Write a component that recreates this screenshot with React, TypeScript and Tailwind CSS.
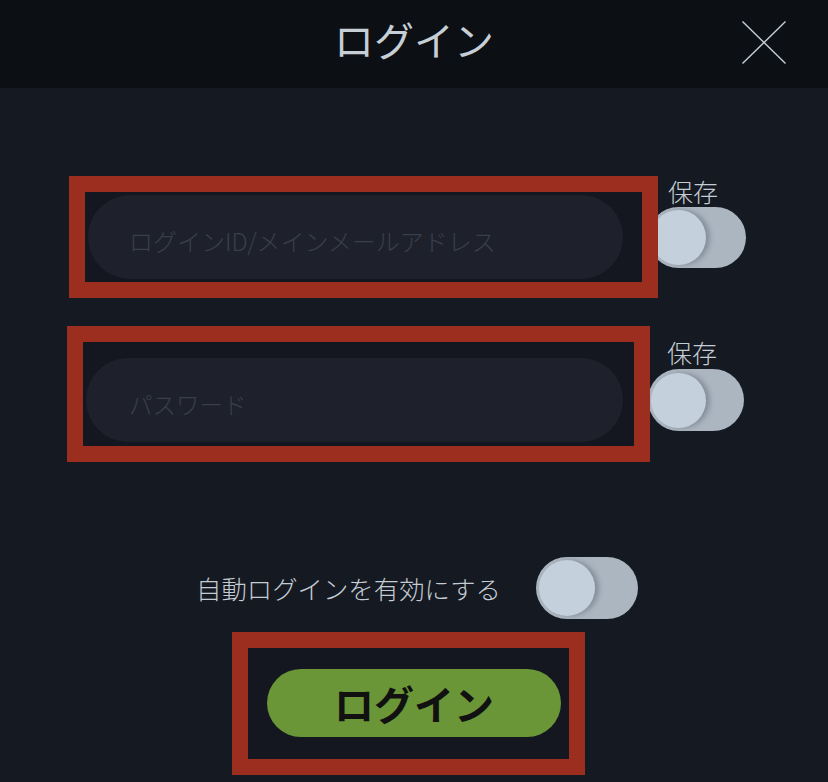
import React from "react";

function Toggle({ w, h, knob }: { w: string; h: string; knob: string }) {
  return (
    <div className={`${w} ${h} rounded-full bg-[#acb6c1] flex items-center pl-[3px]`}>
      <div className={`${knob} rounded-full bg-[#c4d0dc] shadow-[4px_0_5px_rgba(60,70,85,0.35)]`} />
    </div>
  );
}

export default function App() {
  return (
    <div className="w-[828px] h-[782px] overflow-hidden bg-[#151922] font-['Noto_Sans_CJK_JP','Noto_Sans',sans-serif]">
      {/* Header */}
      <div className="relative h-[88px] bg-[#0c0f14] flex justify-center">
        <div className="pt-[13px] text-[40px] leading-[52px] text-[#c6ced6]">ログイン</div>
        <svg className="absolute left-[742px] top-[21px]" width="44" height="43" viewBox="0 0 44 43">
          <line x1="0.5" y1="0.5" x2="43.5" y2="42.5" stroke="#c6ced6" strokeWidth="1.4" />
          <line x1="43.5" y1="0.5" x2="0.5" y2="42.5" stroke="#c6ced6" strokeWidth="1.4" />
        </svg>
      </div>

      {/* Row 1 */}
      <div className="flex items-start ml-[69px] mt-[88px]">
        <div className="relative z-10 w-[589px] h-[122px] border-[16px] border-[#9b2e1e] bg-[#141720]">
          <div className="ml-[3px] mt-[3px] w-[535px] h-[84px] rounded-full bg-[#1e212c] flex items-center pl-[41px] pt-[8px] text-[24px] font-light text-[#393e4a]">
            ログインID/メインメールアドレス
          </div>
        </div>
        <div className="ml-[-10px] flex flex-col">
          <div className="pl-[20px] text-[25px] leading-[30px] font-light text-[#c3cbd3]">保存</div>
          <div className="mt-[1px]">
            <Toggle w="w-[98px]" h="h-[61px]" knob="w-[55px] h-[55px]" />
          </div>
        </div>
      </div>

      {/* Row 2 */}
      <div className="flex items-start ml-[67px] mt-[28px]">
        <div className="relative z-10 w-[583px] h-[136px] border-[16px] border-[#9b2e1e] bg-[#141720]">
          <div className="ml-[3px] mt-[16px] w-[537px] h-[84px] rounded-full bg-[#1e212c] flex items-center pl-[43px] pt-[10px] text-[23.5px] font-light text-[#393e4a]">
            パスワード
          </div>
        </div>
        <div className="ml-[-2px] flex flex-col">
          <div className="mt-[11px] pl-[19px] text-[25px] leading-[30px] font-light text-[#c3cbd3]">保存</div>
          <div className="mt-[2px]">
            <Toggle w="w-[96px]" h="h-[62px]" knob="w-[55px] h-[55px]" />
          </div>
        </div>
      </div>

      {/* Auto login */}
      <div className="flex items-center ml-[196px] mt-[95px]">
        <div className="text-[25.4px] leading-[30px] font-light text-[#c3cbd3]">自動ログインを有効にする</div>
        <div className="ml-[35px]">
          <Toggle w="w-[102px]" h="h-[62px]" knob="w-[56px] h-[56px]" />
        </div>
      </div>

      {/* Login button */}
      <div className="ml-[232px] mt-[13px] w-[353px] h-[143px] border-[16px] border-[#9b2e1e] bg-[#141720]">
        <div className="ml-[19px] mt-[21px] w-[294px] h-[68px] rounded-full bg-[#6a9637] flex items-center justify-center text-[40px] font-bold text-[#111111]">
          ログイン
        </div>
      </div>
    </div>
  );
}
